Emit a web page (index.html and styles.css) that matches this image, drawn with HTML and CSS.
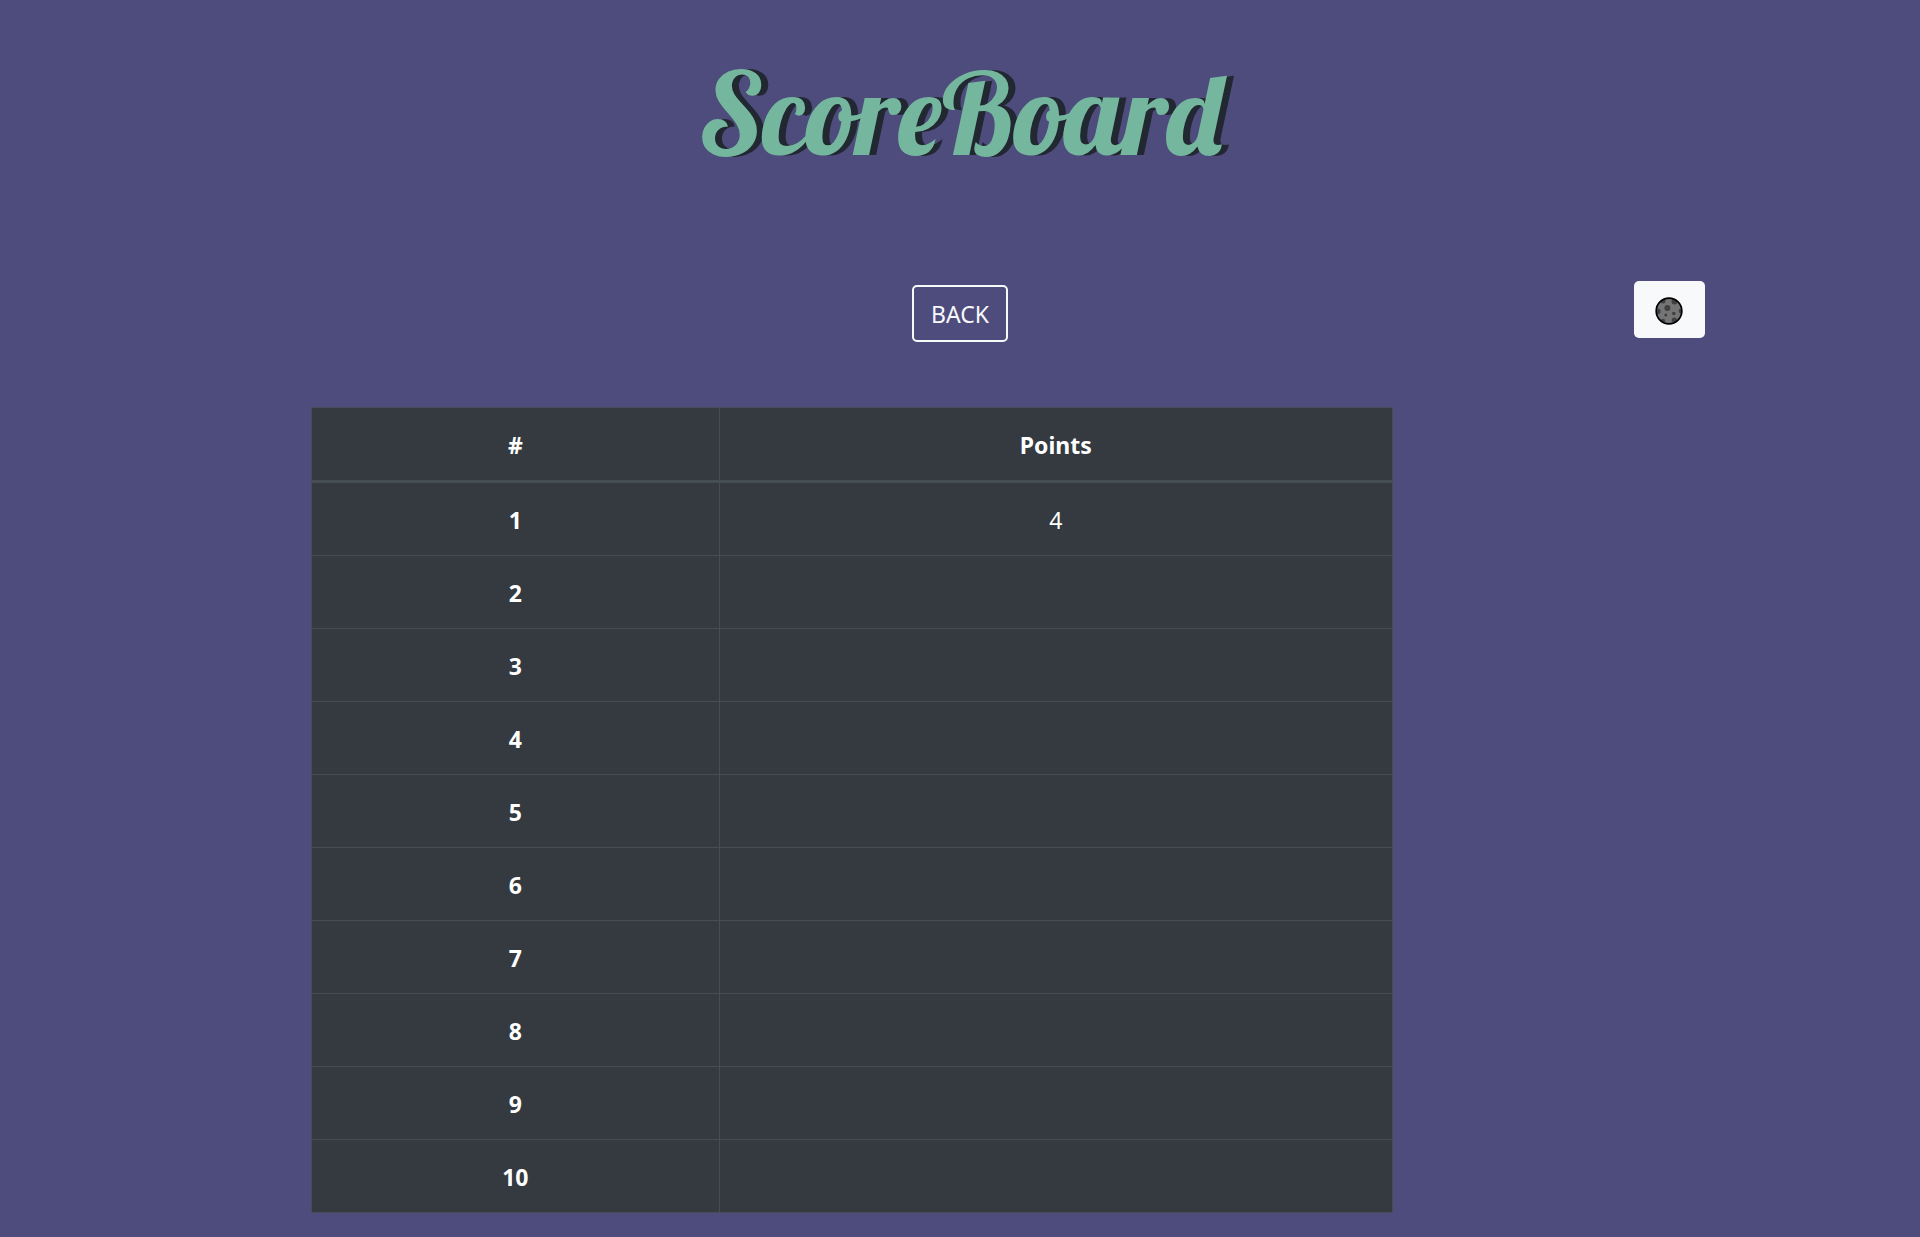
FILE: index.html
```html
<!DOCTYPE html>
<html lang="en">
<head>
  <meta charset="utf-8">
  <meta name="viewport" content="width=device-width, initial-scale=1">
  <title>ScoreBoard</title>
  <link rel="stylesheet" href="styles.css">
</head>
<body>
  <header class="header">
    <h1 class="title">ScoreBoard</h1>
  </header>
  <nav class="toolbar">
    <button class="btn btn-back" type="button">BACK</button>
    <button class="btn btn-theme" type="button" aria-label="Toggle theme">
      <svg class="moon" viewBox="0 0 28 28" aria-hidden="true">
        <defs><clipPath id="disc"><circle cx="14" cy="14" r="12.5"/></clipPath></defs>
        <circle cx="14" cy="14" r="12.8" fill="#757575"/>
        <g fill="#404040" clip-path="url(#disc)">
          <circle cx="12.4" cy="11" r="3"/>
          <circle cx="18.8" cy="16.5" r="1.8"/>
          <circle cx="10.8" cy="18" r="1.5"/>
          <circle cx="2.8" cy="14.2" r="2.8"/>
          <circle cx="8" cy="4" r="2.5"/>
          <circle cx="19.5" cy="4.5" r="3"/>
          <circle cx="25.8" cy="14" r="2.2"/>
          <circle cx="19.4" cy="23.2" r="2.6"/>
          <circle cx="8" cy="24" r="2.2"/>
        </g>
        <circle cx="14" cy="14" r="12.8" fill="none" stroke="#000" stroke-width="1.7"/>
      </svg>
    </button>
  </nav>
  <main class="board">
    <table class="scores">
      <thead>
        <tr><th class="rank" scope="col">#</th><th scope="col">Points</th></tr>
      </thead>
      <tbody>
        <tr><th scope="row">1</th><td>4</td></tr>
        <tr><th scope="row">2</th><td></td></tr>
        <tr><th scope="row">3</th><td></td></tr>
        <tr><th scope="row">4</th><td></td></tr>
        <tr><th scope="row">5</th><td></td></tr>
        <tr><th scope="row">6</th><td></td></tr>
        <tr><th scope="row">7</th><td></td></tr>
        <tr><th scope="row">8</th><td></td></tr>
        <tr><th scope="row">9</th><td></td></tr>
        <tr><th scope="row">10</th><td></td></tr>
      </tbody>
    </table>
  </main>
</body>
</html>
```
FILE: styles.css
```css
* {
  box-sizing: border-box;
}

body {
  margin: 0;
  padding-bottom: 24px;
  background: #4d4c7d;
  color: #fff;
  font-family: "Segoe UI", "Noto Sans", sans-serif;
  font-size: 23px;
  line-height: 36px;
}

.header {
  padding-top: 41px;
  text-align: center;
}

.title {
  margin: 0;
  color: #75b79e;
  font-family: Lobster, "Liberation Serif", serif;
  font-size: 114px;
  font-weight: 400;
  line-height: 144px;
  text-shadow: 7px 0 #222831;
}

.toolbar {
  display: grid;
  grid-template-columns: 1fr auto 1fr;
  min-height: 61px;
  margin: 96px 0 65px;
}

.btn {
  height: 57px;
  border-radius: 5px;
  font: inherit;
  cursor: pointer;
}

.btn-back {
  grid-column: 2;
  align-self: end;
  padding: 0 17px;
  border: 2px solid #f8f9fa;
  background: transparent;
  color: #f8f9fa;
}

.btn-theme {
  display: flex;
  align-items: center;
  align-self: start;
  justify-content: center;
  justify-self: end;
  width: 71px;
  margin-right: 11.2vw;
  padding: 3px 0 0;
  border: 0;
  background: #f8f9fa;
}

.moon {
  width: 28px;
  height: 28px;
}

.board {
  padding-left: 16.2%;
}

.scores {
  width: 67.25%;
  table-layout: fixed;
  border-collapse: collapse;
  background: #343a40;
  text-align: center;
}

.scores th,
.scores td {
  height: 73px;
  padding: 19px 18px 17px;
  border: 1px solid #454d55;
}

.scores .rank {
  width: 37.7%;
}

.scores thead th {
  border-bottom-width: 3px;
}
```
